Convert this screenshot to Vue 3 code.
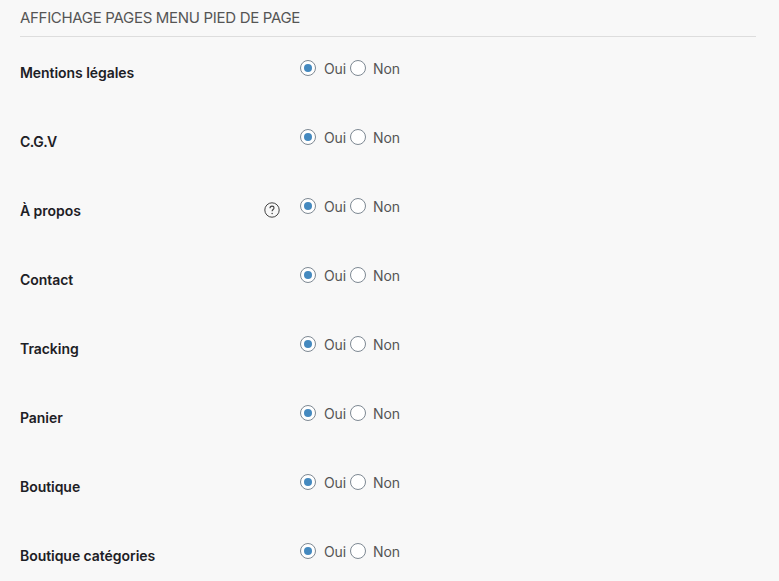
<script setup>
const rows = [
  { label: 'Mentions légales' },
  { label: 'C.G.V' },
  { label: 'À propos', help: true },
  { label: 'Contact' },
  { label: 'Tracking' },
  { label: 'Panier' },
  { label: 'Boutique' },
  { label: 'Boutique catégories' },
]
</script>

<template>
  <main class="panel">
    <h2 class="title">AFFICHAGE PAGES MENU PIED DE PAGE</h2>
    <div v-for="row in rows" :key="row.label" class="row">
      <div class="label">
        <span :class="{ abbr: row.label === 'C.G.V' }">{{ row.label }}</span>
        <svg v-if="row.help" class="help" viewBox="0 0 16 16" width="16" height="16">
          <circle cx="8" cy="8" r="7.2" fill="none" stroke="#444" stroke-width="1" />
          <path d="M6 6.2C6 4.9 6.8 4.1 8 4.1s2 .7 2 1.9c0 1.5-1.9 1.6-1.9 3.3" fill="none" stroke="#444" stroke-width="1.1" />
          <circle cx="8.1" cy="11.5" r=".75" fill="#444" />
        </svg>
      </div>
      <div class="options">
        <span class="radio on"></span><span class="text oui">Oui</span>
        <span class="radio"></span><span class="text non">Non</span>
      </div>
    </div>
  </main>
</template>

<style>
body { background: #f8f8f8; overflow: hidden; }
</style>

<style scoped>
.panel {
  box-sizing: border-box;
  height: 581px;
  overflow: hidden;
  padding: 0 23px 0 20px;
  background: #f8f8f8;
  font-family: Inter, sans-serif;
  font-size: 14px;
  color: #555;
}
.title {
  box-sizing: border-box;
  height: 37px;
  margin: 0;
  padding-top: 8px;
  border-bottom: 1px solid #ddd;
  font-size: 15px;
  line-height: 20px;
  font-weight: 400;
  letter-spacing: -0.31px;
  white-space: nowrap;
}
.row {
  display: flex;
  height: 69px;
}
.label {
  display: flex;
  justify-content: space-between;
  width: 260px;
  height: 20px;
  margin: 26px 20px 0 0;
  line-height: 20px;
  font-weight: 600;
  letter-spacing: -0.05px;
  color: #1d2025;
}
.abbr { letter-spacing: -0.5px; }
.help { margin-top: 1px; }
.options {
  display: flex;
  height: 20px;
  margin-top: 22px;
  line-height: 20px;
}
.radio {
  display: flex;
  box-sizing: border-box;
  width: 16px;
  height: 16px;
  margin: 1px 8px 0 0;
  border: 1px solid #7e8993;
  border-radius: 50%;
  background: #fff;
}
.on::before {
  content: '';
  width: 8px;
  height: 8px;
  margin: 3px;
  border-radius: 50%;
  background: #4489bf;
}
.oui {
  width: 26px;
  letter-spacing: -0.15px;
}
.non {
  margin-left: -1px;
  letter-spacing: -0.05px;
}
</style>
